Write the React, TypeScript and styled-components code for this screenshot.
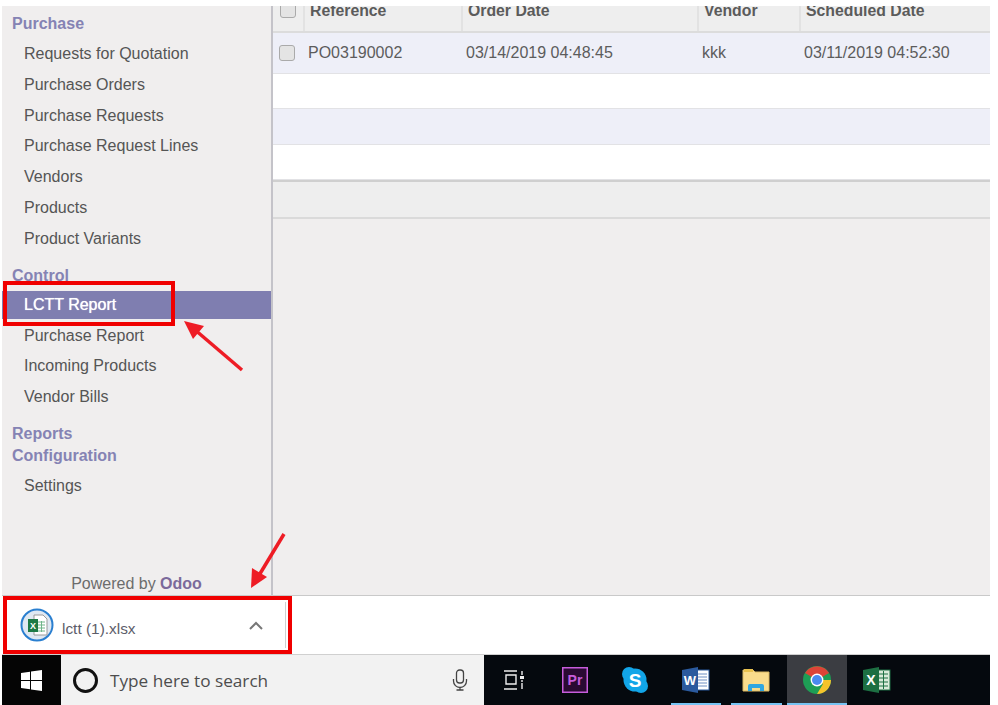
import * as React from "react"
import styled, { createGlobalStyle } from "styled-components"

const GlobalStyle = createGlobalStyle`
  html, body {
    margin: 0;
    padding: 0;
    background: #fff;
    font-family: "Liberation Sans", Arial, sans-serif;
  }
`

const Page = styled.div`
  position: relative;
  width: 998px;
  height: 705px;
  padding: 6px 8px 0 2px;
  box-sizing: border-box;
  display: flex;
  flex-direction: column;
  overflow: hidden;
  background: #fff;
`

const Main = styled.div`
  display: flex;
  height: 589px;
  background: #f0eeee;
`

const Sidebar = styled.nav`
  flex: none;
  display: flex;
  flex-direction: column;
  padding-top: 7px;
  box-sizing: border-box;
  border-right: 2px solid #c4c3c9;
  width: 271px;
`

const SectionTitle = styled.div<{ $gap?: number; $after?: number }>`
  height: 22px;
  line-height: 22px;
  padding-left: 10px;
  margin-top: ${p => p.$gap ?? 0}px;
  margin-bottom: ${p => p.$after ?? 0}px;
  font-size: 16px;
  font-weight: 700;
  color: #8583b4;
`

const MenuItem = styled.div<{ $active?: boolean }>`
  height: 30.8px;
  line-height: 30.8px;
  padding-left: 22px;
  font-size: 16px;
  color: ${p => (p.$active ? "#fff" : "#555")};
  background: ${p => (p.$active ? "#7f7eb0" : "transparent")};
  text-shadow: ${p => (p.$active ? "0 0 0.7px #fff" : "none")};
`

const ActiveItem = styled(MenuItem)`
  height: 28px;
  line-height: 28px;
  margin-bottom: 2px;
  margin-top: 4px;
`

const PoweredBy = styled.div`
  margin-top: auto;
  height: 24px;
  line-height: 24px;
  margin-bottom: -1px;
  text-align: center;
  font-size: 16px;
  color: #6c6c6c;

  b {
    color: #7b6a9b;
  }
`

const Content = styled.section`
  flex: 1;
  display: flex;
  flex-direction: column;
  min-width: 0;
`

const Grid = styled.div`
  display: grid;
  grid-template-columns: 30px 158px 236px 102px 1fr;
  align-items: center;
`

const HeaderRow = styled(Grid)`
  height: 25px;
  align-items: stretch;
  background: #eee;
  border-bottom: 2px solid #dcdcdc;
  overflow: hidden;
`

const HeaderCell = styled.div`
  border-left: 2px solid #e2e2e2;
  padding-left: 5px;
  line-height: 9px;
  font-size: 15.8px;
  font-weight: 700;
  color: #5b5b5b;

  &:first-child {
    border-left: 0;
    padding-left: 7px;
  }
`

const Row = styled(Grid)<{ $height: number; $tinted?: boolean }>`
  height: ${p => p.$height}px;
  box-sizing: border-box;
  background: ${p => (p.$tinted ? "#eeeff8" : "#fff")};
  border-bottom: 1px solid #e2e2e5;
`

const Cell = styled.div`
  padding-left: 5px;
  font-size: 16px;
  color: #5c5c5c;
`

const CheckCell = styled.div`
  padding-left: 6px;
  display: flex;
`

const Checkbox = styled.span<{ $clipped?: boolean }>`
  display: block;
  width: 14px;
  height: 14px;
  border: 1px solid #aaa;
  border-radius: 3px;
  background: #e4e4e4;
  margin-top: ${p => (p.$clipped ? "-4px" : "0")};
`

const TableFooter = styled.div`
  height: 35px;
  background: #eee;
  border-top: 2px solid #cfcfcf;
  border-bottom: 2px solid #dadada;
`

const DownloadBar = styled.div`
  height: 60px;
  box-sizing: border-box;
  border-top: 1px solid #c9c9c9;
  border-bottom: 1px solid #d0d0d0;
  display: flex;
  align-items: center;
  background: #fff;
`

const DownloadChip = styled.div`
  width: 284px;
  height: 46px;
  padding: 0 0 0 18px;
  box-sizing: border-box;
  display: flex;
  align-items: center;
  border-right: 1px solid #cfcfcf;
`

const FileName = styled.span`
  font-size: 15.4px;
  color: #5d5d6a;
  margin-left: 8px;
  padding-top: 8px;
`

const ChipChevron = styled.span`
  margin-left: auto;
  margin-right: 22px;
  display: flex;
`

const Taskbar = styled.div`
  height: 50px;
  display: flex;
  background: #05090e;
`

const StartButton = styled.div`
  width: 59px;
  display: flex;
  align-items: center;
  justify-content: center;
  background: #050505;
`

const SearchBox = styled.div`
  width: 423px;
  box-sizing: border-box;
  display: flex;
  align-items: center;
  padding: 0 16px 0 12px;
  background: #f2f2f2;
  color: #4d4d4d;
  font-family: "Open Sans", "Liberation Sans", sans-serif;
  font-size: 17.2px;
`

const CortanaRing = styled.span`
  width: 19px;
  height: 19px;
  border: 3.5px solid #111;
  border-radius: 50%;
  margin-right: 12px;
  flex: none;
`

const SearchText = styled.span`
  flex: 1;
`

const TrayIcon = styled.div<{ $running?: "short" | "full" }>`
  position: relative;
  width: 60.5px;
  height: 50px;
  display: flex;
  align-items: center;
  justify-content: center;
  padding-bottom: 1px;
  box-sizing: border-box;
  background: ${p => (p.$running === "full" ? "#3b3d42" : "transparent")};

  &::after {
    content: "";
    display: ${p => (p.$running ? "block" : "none")};
    position: absolute;
    bottom: 0;
    left: ${p => (p.$running === "full" ? 0 : 5)}px;
    right: ${p => (p.$running === "full" ? 0 : 5)}px;
    height: 2px;
    background: #76c3f2;
  }
`

const RedBox = styled.div<{ $x: number; $y: number; $w: number; $h: number }>`
  position: absolute;
  left: ${p => p.$x}px;
  top: ${p => p.$y}px;
  width: ${p => p.$w}px;
  height: ${p => p.$h}px;
  box-sizing: border-box;
  border: 4px solid #f00000;
`

const Annotations = styled.svg`
  position: absolute;
  left: 0;
  top: 0;
  pointer-events: none;
`

const topMenu = [
  "Requests for Quotation",
  "Purchase Orders",
  "Purchase Requests",
  "Purchase Request Lines",
  "Vendors",
  "Products",
  "Product Variants",
]

const controlMenu = ["Purchase Report", "Incoming Products", "Vendor Bills"]

const columns = ["Reference", "Order Date", "Vendor", "Scheduled Date"]

const ExcelFileIcon = () => (
  <svg width="34" height="34" viewBox="0 0 34 34">
    <circle cx="17" cy="17" r="15.5" fill="#dfe8f2" stroke="#2a7fd0" strokeWidth="2" />
    <path d="M14 7h9l4 4v16H14z" fill="#fff" stroke="#9a9a9a" />
    <path d="M18 14h7M18 17h7M18 20h7M18 23h7M21.5 13v11" stroke="#6fb58a" fill="none" />
    <rect x="8" y="11" width="10" height="13" fill="#1d7a45" />
    <text x="13" y="21" textAnchor="middle" fontSize="9" fontWeight="700" fontFamily="Liberation Sans" fill="#fff">X</text>
  </svg>
)

const WindowsLogo = () => (
  <svg width="21" height="21" viewBox="0 0 21 21" fill="#fff">
    <path d="M0 3l9-1.3V10H0zM10 1.5L21 0v10H10zM0 11h9v8.3L0 18zM10 11h11v10l-11-1.5z" />
  </svg>
)

const MicIcon = () => (
  <svg width="16" height="22" viewBox="0 0 16 22" fill="none" stroke="#444" strokeWidth="1.3">
    <rect x="4.5" y="1" width="7" height="13" rx="3" />
    <path d="M1.5 10v2a6.5 6.5 0 0 0 13 0v-2M8 18.5V21M4.5 21h7" />
  </svg>
)

const TaskViewIcon = () => (
  <svg width="22" height="20" viewBox="0 0 22 20" fill="none" stroke="#eee" strokeWidth="1.4">
    <path d="M1 1h13M1 19h13M3 5h10v9H3zM19 1v4M19 13v6" />
    <rect x="17" y="6" width="4" height="3" fill="#eee" stroke="none" />
    <path d="M19 10v2" />
  </svg>
)

const PremiereIcon = () => (
  <svg width="26" height="26" viewBox="0 0 26 26">
    <rect x="0.75" y="0.75" width="24.5" height="24.5" fill="#2a0a33" stroke="#c65ddb" strokeWidth="1.5" />
    <text x="13" y="18" textAnchor="middle" fontSize="14" fontWeight="700" fontFamily="Liberation Sans" fill="#c65ddb">Pr</text>
  </svg>
)

const SkypeIcon = () => (
  <svg width="28" height="28" viewBox="0 0 28 28">
    <circle cx="14" cy="14" r="11.5" fill="#12a5e8" />
    <circle cx="8" cy="8" r="7" fill="#12a5e8" />
    <circle cx="20" cy="20" r="7" fill="#12a5e8" />
    <text x="14" y="20.5" textAnchor="middle" fontSize="19" fontWeight="700" fontFamily="Liberation Sans" fill="#fff">S</text>
  </svg>
)

const WordIcon = () => (
  <svg width="28" height="28" viewBox="0 0 28 28">
    <rect x="12" y="4" width="15" height="20" fill="#fff" stroke="#2b5a9e" />
    <path d="M16 8h9M16 11h9M16 14h9M16 17h9M16 20h9" stroke="#6e8fc2" />
    <path d="M0 4L16 1v26L0 24z" fill="#2b5a9e" />
    <text x="8" y="18.5" textAnchor="middle" fontSize="13" fontWeight="700" fontFamily="Liberation Sans" fill="#fff">W</text>
  </svg>
)

const FolderIcon = () => (
  <svg width="28" height="24" viewBox="0 0 28 24">
    <path d="M1 2h10l2 2h14v19H1z" fill="#f9dc8c" stroke="#d9b862" />
    <rect x="2" y="1" width="9" height="3" fill="#e9c24f" />
    <path d="M6 23v-5a2 2 0 0 1 2-2h12a2 2 0 0 1 2 2v5h-4v-3h-8v3z" fill="#2fa6e0" />
  </svg>
)

const ChromeIcon = () => (
  <svg width="28" height="28" viewBox="0 0 28 28">
    <circle cx="14" cy="14" r="14" fill="#1e9e55" />
    <path d="M14 14L2 7A14 14 0 0 1 26.1 7z" fill="#dc4437" />
    <path d="M14 14h14A14 14 0 0 1 14 28L20 18z" fill="#f5c32c" />
    <circle cx="14" cy="14" r="6.4" fill="#fff" />
    <circle cx="14" cy="14" r="5" fill="#4a8bf0" />
  </svg>
)

const ExcelIcon = () => (
  <svg width="28" height="28" viewBox="0 0 28 28">
    <rect x="12" y="4" width="15" height="20" fill="#d9ead9" stroke="#1d6f42" />
    <path d="M16 8h9M16 12h9M16 16h9M16 20h9M20.5 5v18" stroke="#1d6f42" />
    <path d="M0 4L16 1v26L0 24z" fill="#1d6f42" />
    <text x="8" y="19" textAnchor="middle" fontSize="14" fontWeight="700" fontFamily="Liberation Sans" fill="#fff">X</text>
  </svg>
)

const App: React.FC = () => {
  return (
    <>
      <GlobalStyle />
      <Page>
        <Main>
          <Sidebar>
            <SectionTitle $after={4}>Purchase</SectionTitle>
            {topMenu.map(label => (
              <MenuItem key={label}>{label}</MenuItem>
            ))}
            <SectionTitle $gap={10}>Control</SectionTitle>
            <ActiveItem $active>LCTT Report</ActiveItem>
            {controlMenu.map(label => (
              <MenuItem key={label}>{label}</MenuItem>
            ))}
            <SectionTitle $gap={10}>Reports</SectionTitle>
            <SectionTitle $after={4}>Configuration</SectionTitle>
            <MenuItem>Settings</MenuItem>
            <PoweredBy>
              Powered by <b>Odoo</b>
            </PoweredBy>
          </Sidebar>
          <Content>
            <HeaderRow>
              <HeaderCell>
                <Checkbox $clipped />
              </HeaderCell>
              {columns.map(label => (
                <HeaderCell key={label}>{label}</HeaderCell>
              ))}
            </HeaderRow>
            <Row $height={41} $tinted>
              <CheckCell>
                <Checkbox />
              </CheckCell>
              <Cell>PO03190002</Cell>
              <Cell>03/14/2019 04:48:45</Cell>
              <Cell>kkk</Cell>
              <Cell>03/11/2019 04:52:30</Cell>
            </Row>
            <Row $height={35} />
            <Row $height={36} $tinted />
            <Row $height={35} />
            <TableFooter />
          </Content>
        </Main>
        <DownloadBar>
          <DownloadChip>
            <ExcelFileIcon />
            <FileName>lctt (1).xlsx</FileName>
            <ChipChevron>
              <svg width="14" height="9" viewBox="0 0 14 9" fill="none" stroke="#777" strokeWidth="2">
                <path d="M1 8l6-6 6 6" />
              </svg>
            </ChipChevron>
          </DownloadChip>
        </DownloadBar>
        <Taskbar>
          <StartButton>
            <WindowsLogo />
          </StartButton>
          <SearchBox>
            <CortanaRing />
            <SearchText>Type here to search</SearchText>
            <MicIcon />
          </SearchBox>
          <TrayIcon>
            <TaskViewIcon />
          </TrayIcon>
          <TrayIcon>
            <PremiereIcon />
          </TrayIcon>
          <TrayIcon>
            <SkypeIcon />
          </TrayIcon>
          <TrayIcon $running="short">
            <WordIcon />
          </TrayIcon>
          <TrayIcon $running="short">
            <FolderIcon />
          </TrayIcon>
          <TrayIcon $running="full">
            <ChromeIcon />
          </TrayIcon>
          <TrayIcon>
            <ExcelIcon />
          </TrayIcon>
        </Taskbar>
        <RedBox $x={3} $y={281} $w={172} $h={45} />
        <RedBox $x={3} $y={596} $w={289} $h={58} />
        <Annotations width="998" height="705" viewBox="0 0 998 705">
          <path d="M242 370L194 329" stroke="#ee1c25" strokeWidth="3.5" fill="none" />
          <path d="M184 321L204 326L193 339z" fill="#ee1c25" />
          <path d="M284 534L258 577" stroke="#ee1c25" strokeWidth="3.5" fill="none" />
          <path d="M251 588L252 568L267 577z" fill="#ee1c25" />
        </Annotations>
      </Page>
    </>
  )
}

export default App
